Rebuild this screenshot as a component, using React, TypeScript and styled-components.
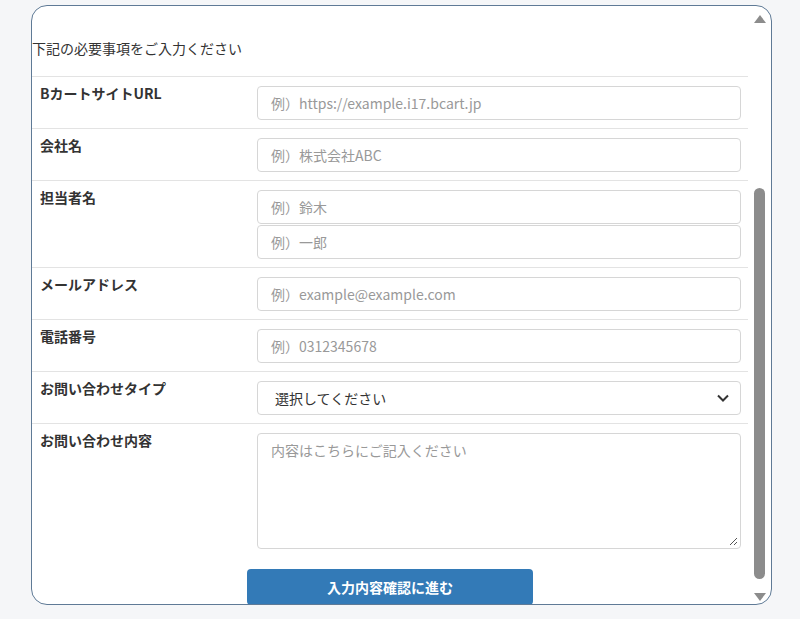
import React from "react";
import styled, { createGlobalStyle } from "styled-components";

const G = createGlobalStyle`
  html,body{margin:0;background:#f5f6f8;}
  *{box-sizing:border-box;}
  body{font-family:"Noto Sans CJK JP","Noto Sans",sans-serif;color:#333;}
`;
const Page = styled.div`padding:5px 0 0 31px;height:619px;`;
const Panel = styled.div`
  position:relative;width:741px;height:600px;background:#fff;border:1.5px solid #5f7a96;
  border-radius:16px;overflow:hidden;
`;
const Content = styled.div`width:716px;`;
const Intro = styled.div`height:70px;padding-top:32px;font-size:14px;color:#333;`;
const Row = styled.div`
  display:grid;grid-template-columns:217px 484px;gap:0;padding:9px 0 8px 8px;
  border-top:1px solid #e3e3e3;
`;
const Label = styled.div`font-size:14px;font-weight:bold;color:#333;margin-top:-3px;`;
const Stack = styled.div`display:flex;flex-direction:column;gap:1px;`;
const Input = styled.div`
  height:34px;border:1px solid #d6d6d6;border-radius:4px;display:flex;align-items:center;
  padding:0 13px;font-size:14px;color:#999;background:#fff;
  font-family:"Noto Sans CJK JP","Noto Sans",sans-serif;
`;
const Select = styled(Input)`color:#333;justify-content:space-between;padding:0 11px 0 17px;`;
const Area = styled(Input)`height:116px;align-items:flex-start;padding-top:6px;position:relative;`;
const Grip = styled.svg`position:absolute;right:2px;bottom:2px;`;
const BtnRow = styled.div`display:flex;justify-content:center;padding-top:12px;`;
const Button = styled.div`
  width:286px;height:36px;background:#337ab7;border-radius:4px;color:#fff;font-size:14px;
  font-weight:bold;display:flex;align-items:center;justify-content:center;
`;
const Track = styled.div`position:absolute;right:3px;top:4px;bottom:2px;width:16px;`;
const Thumb = styled.div`position:absolute;left:2px;width:11px;top:178px;height:391px;background:#8c8c8c;border-radius:6px;`;
const Arrow = styled.svg<{ $bottom?: boolean }>`position:absolute;left:1px;${p => p.$bottom ? "bottom:0;" : "top:4px;"}`;

export default function App() {
  return (
    <Page>
      <G />
      <Panel>
        <Content>
          <Intro>下記の必要事項をご入力ください</Intro>
          <Row><Label>BカートサイトURL</Label><Input>例）https://example.i17.bcart.jp</Input></Row>
          <Row><Label>会社名</Label><Input>例）株式会社ABC</Input></Row>
          <Row><Label>担当者名</Label><Stack><Input>例）鈴木</Input><Input>例）一郎</Input></Stack></Row>
          <Row><Label>メールアドレス</Label><Input>例）example@example.com</Input></Row>
          <Row><Label>電話番号</Label><Input>例）0312345678</Input></Row>
          <Row><Label>お問い合わせタイプ</Label>
            <Select>選択してください
              <svg width="12" height="8" viewBox="0 0 12 8"><path d="M1 1.5l5 5 5-5" stroke="#333" strokeWidth="2" fill="none" /></svg>
            </Select></Row>
          <Row><Label>お問い合わせ内容</Label>
            <Area>内容はこちらにご記入ください
              <Grip width="10" height="10" viewBox="0 0 10 10"><path d="M9 2L2 9M9 6L6 9" stroke="#555" strokeWidth="1" /></Grip>
            </Area></Row>
          <BtnRow><Button>入力内容確認に進む</Button></BtnRow>
        </Content>
        <Track>
          <Arrow width="14" height="10" viewBox="0 0 14 10"><path d="M7 1L13 9H1z" fill="#8c8c8c" /></Arrow>
          <Thumb />
          <Arrow $bottom width="14" height="10" viewBox="0 0 14 10"><path d="M1 1H13L7 9z" fill="#8c8c8c" /></Arrow>
        </Track>
      </Panel>
    </Page>
  );
}
